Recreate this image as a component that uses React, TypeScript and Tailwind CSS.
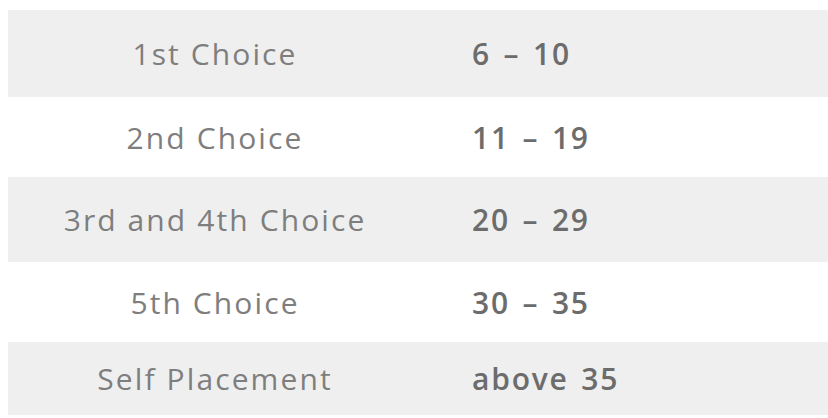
const rows = [
  { choice: "1st Choice", range: "6 – 10", h: "h-[87px]", bg: "bg-[#efefef]" },
  { choice: "2nd Choice", range: "11 – 19", h: "h-[80px]", bg: "bg-white" },
  { choice: "3rd and 4th Choice", range: "20 – 29", h: "h-[85px]", bg: "bg-[#efefef]" },
  { choice: "5th Choice", range: "30 – 35", h: "h-[80px]", bg: "bg-white" },
  { choice: "Self Placement", range: "above 35", h: "h-[73px]", bg: "bg-[#efefef]" },
];

const App = () => {
  return (
    <main className="w-[828px] h-[418px] bg-white overflow-hidden pt-[10px] pl-[8px] font-['Open_Sans',sans-serif]">
      <section className="w-[820px] flex flex-col">
        {rows.map((row, index) => {
          return (
            <div key={index} className={`${row.h} ${row.bg} flex items-center`}>
              <div className="w-[414px] text-center text-[30px] tracking-[0.07em] text-[#7e7e7e]">
                {row.choice}
              </div>
              <div className="pl-[50px] text-[30px] tracking-[0.06em] font-semibold text-[#6c6c6c] [word-spacing:3px]">
                {row.range}
              </div>
            </div>
          );
        })}
      </section>
    </main>
  );
};

export default App;
